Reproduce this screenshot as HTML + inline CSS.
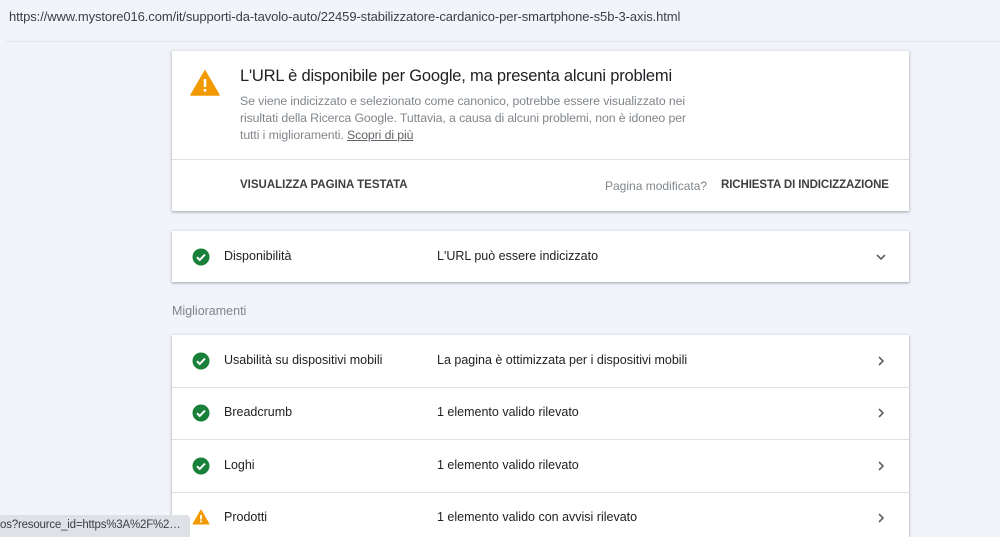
<!DOCTYPE html>
<html><head><meta charset="utf-8"><style>
*{margin:0;padding:0;box-sizing:border-box}
html,body{width:1000px;height:537px;overflow:hidden}
body{background:#f1f4fa;font-family:"Liberation Sans",Arial,sans-serif;position:relative;color:#202124}
.url{position:absolute;left:9px;top:9px;font-size:13px;color:#3c4043;letter-spacing:-0.1px}
.hr{position:absolute;left:6px;right:0;top:41px;height:1px;background:#e3e6ec}
.card{position:absolute;left:172px;width:737px;background:#fff;box-shadow:0 1px 2px rgba(60,64,67,.3),0 1px 3px 1px rgba(60,64,67,.12)}
.abs{position:absolute;white-space:nowrap}
.row{position:absolute;left:0;right:0;height:53px;border-bottom:1px solid #e0e0e0}
.row .l{position:absolute;left:52px;top:18px;font-size:12.5px;color:#202124}
.row .m{position:absolute;left:265px;top:18px;font-size:12.5px;color:#202124}
.row svg.ic{position:absolute;left:20px;top:17px}
.row svg.ch{position:absolute;left:702px;top:19px}
</style></head><body>
<div class="url">https://www.mystore016.com/it/supporti-da-tavolo-auto/22459-stabilizzatore-cardanico-per-smartphone-s5b-3-axis.html</div>
<div class="hr"></div>

<div class="card" style="top:51px;height:160px">
<svg class="abs" style="left:18px;top:19px" width="30" height="26" viewBox="0 0 30 26"><path d="M15 1 L29 25 L1 25 Z" fill="#f29900" stroke="#f29900" stroke-linejoin="round" stroke-width="1.5"/><rect x="13.7" y="9" width="2.6" height="8" fill="#fff"/><rect x="13.7" y="19" width="2.6" height="2.6" fill="#fff"/></svg>
<div class="abs" style="left:68px;top:16px;font-size:16.5px;color:#202124;letter-spacing:-0.2px">L'URL è disponibile per Google, ma presenta alcuni problemi</div>
<div class="abs" style="left:68px;top:42px;font-size:12.3px;line-height:17px;color:#80868b;letter-spacing:-0.1px">Se viene indicizzato e selezionato come canonico, potrebbe essere visualizzato nei<br>risultati della Ricerca Google. Tuttavia, a causa di alcuni problemi, non è idoneo per<br>tutti i miglioramenti. <span style="text-decoration:underline;color:#5f6368">Scopri di più</span></div>
<div class="abs" style="left:0;right:0;top:108px;height:1px;background:#e0e0e0"></div>
<div class="abs" style="left:68px;top:128px;font-size:11.5px;font-weight:bold;color:#3c4043">VISUALIZZA PAGINA TESTATA</div>
<div class="abs" style="left:433px;top:128px;font-size:12px;color:#80868b">Pagina modificata?</div>
<div class="abs" style="left:549px;top:128px;font-size:11.5px;font-weight:bold;color:#3c4043;letter-spacing:-0.1px">RICHIESTA DI INDICIZZAZIONE</div>
</div>

<div class="card" style="top:231px;height:51px">
<div class="row" style="border:0">
<svg class="ic" width="18" height="18" viewBox="0 0 18 18"><circle cx="9" cy="9" r="8.5" fill="#188038"/><path d="M5 9.2l2.7 2.7L13 6.6" stroke="#fff" stroke-width="2" fill="none"/></svg>
<div class="l">Disponibilità</div><div class="m">L'URL può essere indicizzato</div>
<svg class="ch" width="14" height="14" viewBox="0 0 14 14" style="top:19px"><path d="M3 5l4 4 4-4" stroke="#5f6368" stroke-width="1.6" fill="none"/></svg>
</div></div>

<div class="abs" style="left:172px;top:304px;font-size:12.5px;color:#80868b">Miglioramenti</div>

<div class="card" style="top:335px;height:210px">
<div class="row" style="top:0">
<svg class="ic" width="18" height="18" viewBox="0 0 18 18"><circle cx="9" cy="9" r="8.5" fill="#188038"/><path d="M5 9.2l2.7 2.7L13 6.6" stroke="#fff" stroke-width="2" fill="none"/></svg>
<div class="l">Usabilità su dispositivi mobili</div><div class="m">La pagina è ottimizzata per i dispositivi mobili</div>
<svg class="ch" width="14" height="14" viewBox="0 0 14 14"><path d="M5 3l4 4-4 4" stroke="#5f6368" stroke-width="1.6" fill="none"/></svg></div>
<div class="row" style="top:52px">
<svg class="ic" width="18" height="18" viewBox="0 0 18 18"><circle cx="9" cy="9" r="8.5" fill="#188038"/><path d="M5 9.2l2.7 2.7L13 6.6" stroke="#fff" stroke-width="2" fill="none"/></svg>
<div class="l">Breadcrumb</div><div class="m">1 elemento valido rilevato</div>
<svg class="ch" width="14" height="14" viewBox="0 0 14 14"><path d="M5 3l4 4-4 4" stroke="#5f6368" stroke-width="1.6" fill="none"/></svg></div>
<div class="row" style="top:105px">
<svg class="ic" width="18" height="18" viewBox="0 0 18 18"><circle cx="9" cy="9" r="8.5" fill="#188038"/><path d="M5 9.2l2.7 2.7L13 6.6" stroke="#fff" stroke-width="2" fill="none"/></svg>
<div class="l">Loghi</div><div class="m">1 elemento valido rilevato</div>
<svg class="ch" width="14" height="14" viewBox="0 0 14 14"><path d="M5 3l4 4-4 4" stroke="#5f6368" stroke-width="1.6" fill="none"/></svg></div>
<div class="row" style="top:157px;border:0">
<svg class="ic" width="18" height="16" viewBox="0 0 18 16"><path d="M9 1L17 15H1Z" fill="#f29900" stroke="#f29900" stroke-linejoin="round"/><rect x="8.1" y="6" width="1.8" height="4.5" fill="#fff"/><rect x="8.1" y="11.5" width="1.8" height="1.8" fill="#fff"/></svg>
<div class="l">Prodotti</div><div class="m">1 elemento valido con avvisi rilevato</div>
<svg class="ch" width="14" height="14" viewBox="0 0 14 14"><path d="M5 3l4 4-4 4" stroke="#5f6368" stroke-width="1.6" fill="none"/></svg></div>
</div>

<div class="abs" style="left:0;top:515px;width:190px;height:22px;background:#dee1e6;border-top-right-radius:4px;font-size:11.5px;color:#3c4043;padding:4px 4px 0 0;overflow:hidden;text-overflow:ellipsis;letter-spacing:-0.2px">os?resource_id=https%3A%2F%2Fwww.mystore016.com</div>
</body></html>
